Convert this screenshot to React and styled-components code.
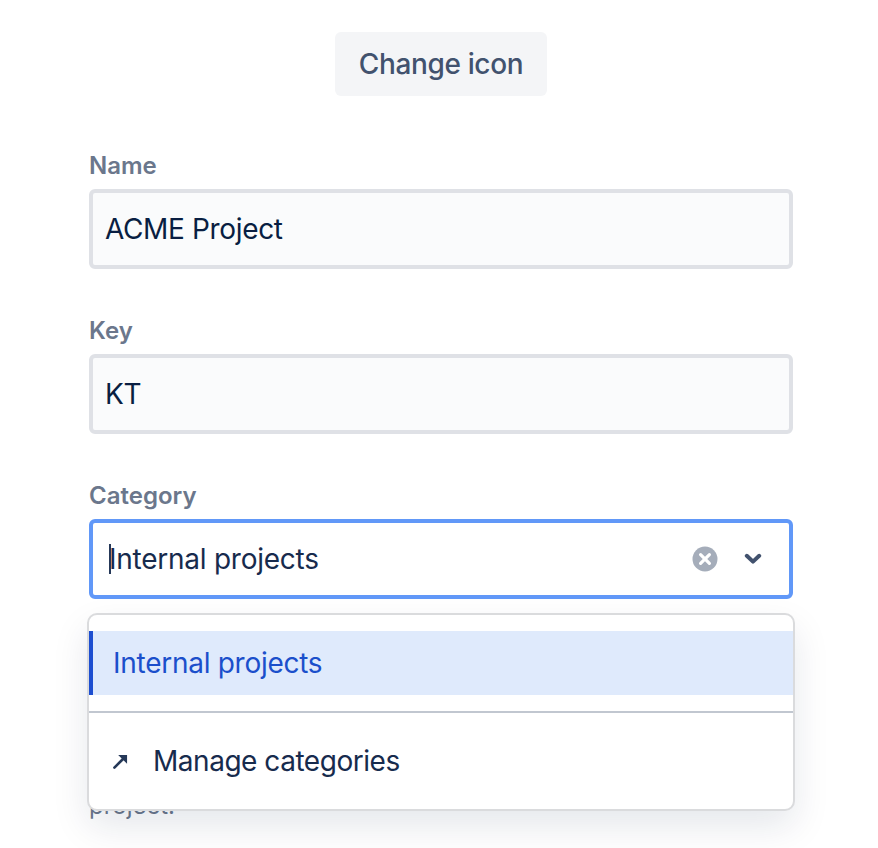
import styled, { createGlobalStyle } from "styled-components"

const GlobalStyle = createGlobalStyle`
    html, body {
        margin: 0;
        padding: 0;
        background: #FFFFFF;
        font-family: 'Inter', 'Liberation Sans', sans-serif;
    }
    body {
        height: 848px;
        overflow: hidden;
    }
`

export default function App() {
    return (
        <>
            <GlobalStyle />
            <Form>
                <IconRow>
                    <ChangeIcon>Change icon</ChangeIcon>
                </IconRow>

                <Field>
                    <Label>Name</Label>
                    <TextBox>ACME Project</TextBox>
                </Field>

                <Field>
                    <Label>Key</Label>
                    <TextBox>KT</TextBox>
                </Field>

                <Field>
                    <Label>Category</Label>
                    <SelectWrap>
                        <SelectBox>
                            <Caret />
                            <SelectValue>Internal projects</SelectValue>
                            <ClearIcon />
                            <ChevronIcon />
                        </SelectBox>
                        <Menu>
                            <MenuList>
                                <SelectedOption>Internal projects</SelectedOption>
                            </MenuList>
                            <MenuFooter>
                                <ArrowIcon />
                                <FooterLabel>Manage categories</FooterLabel>
                            </MenuFooter>
                        </Menu>
                    </SelectWrap>
                </Field>

                <HelpText>project.</HelpText>
            </Form>
        </>
    )
}

function ClearIcon() {
    return (
        <ClearSvg viewBox="0 0 26 26" width="26" height="26">
            <circle cx="13" cy="13" r="12.5" fill="#A5ADBA" />
            <path d="M8.6 8.6L17.4 17.4M17.4 8.6L8.6 17.4" stroke="#FFFFFF" strokeWidth="3.2" strokeLinecap="round" />
        </ClearSvg>
    )
}

function ChevronIcon() {
    return (
        <ChevronSvg viewBox="0 0 18 12" width="18" height="12">
            <path d="M2.8 2.8L9 8.6L15.2 2.8" fill="none" stroke="#42526E" strokeWidth="4" strokeLinecap="round" strokeLinejoin="round" />
        </ChevronSvg>
    )
}

function ArrowIcon() {
    return (
        <ArrowSvg viewBox="0 0 16 16" width="15" height="15">
            <path d="M1.5 14.5L11.5 4.5" fill="none" stroke="#253858" strokeWidth="2.8" strokeLinecap="round" />
            <path d="M5.5 1H15V10.5Z" fill="#253858" />
        </ArrowSvg>
    )
}

const Form = styled.div`
    width: 704px;
    margin-left: 89px;
    padding-top: 32px;
    display: flex;
    flex-direction: column;
`

const IconRow = styled.div`
    display: flex;
    justify-content: center;
    margin-bottom: 50px;
`

const ChangeIcon = styled.button`
    width: 212px;
    height: 64px;
    padding: 0;
    border: none;
    border-radius: 6px;
    background: #F4F5F7;
    color: #42526E;
    font-family: 'Inter', 'Liberation Sans', sans-serif;
    font-size: 28px;
    font-weight: 500;
    letter-spacing: -0.35px;
`

const Field = styled.div`
    display: flex;
    flex-direction: column;
    margin-bottom: 42px;
`

const Label = styled.label`
    height: 40px;
    line-height: 40px;
    margin-bottom: 3px;
    color: #6B778C;
    font-size: 24px;
    font-weight: 600;
`

const TextBox = styled.div`
    box-sizing: border-box;
    height: 80px;
    padding: 0 12px;
    display: flex;
    align-items: center;
    border: 4px solid #DFE1E6;
    border-radius: 6px;
    background: #FAFBFC;
    color: #091E42;
    font-size: 28px;
    letter-spacing: -0.35px;
`

const SelectWrap = styled.div`
    position: relative;
`

const SelectBox = styled.div`
    box-sizing: border-box;
    height: 80px;
    padding: 0 27px 0 16px;
    display: flex;
    align-items: center;
    border: 4px solid #6198F8;
    border-radius: 6px;
    background: #FFFFFF;
`

const Caret = styled.span`
    width: 2px;
    height: 30px;
    margin-right: -2px;
    background: #253858;
`

const SelectValue = styled.span`
    flex: 1;
    color: #172B4D;
    font-size: 28px;
    letter-spacing: -0.25px;
`

const ClearSvg = styled.svg`
    flex: none;
    margin-right: 26px;
`

const ChevronSvg = styled.svg`
    flex: none;
`

const Menu = styled.div`
    position: absolute;
    z-index: 2;
    top: 94px;
    left: -2px;
    right: -2px;
    box-sizing: border-box;
    height: 198px;
    border: 2px solid #DADBDD;
    border-radius: 10px;
    background: #FFFFFF;
    box-shadow: 0 16px 36px rgba(9, 30, 66, 0.1);
    display: flex;
    flex-direction: column;
`

const MenuList = styled.div`
    padding: 16px 0 16px;
    border-bottom: 2px solid #C1C7D0;
`

const SelectedOption = styled.div`
    box-sizing: border-box;
    height: 64px;
    padding-left: 20px;
    display: flex;
    align-items: center;
    border-left: 4px solid #1D4ED0;
    background: #DFEAFC;
    color: #1B4FCB;
    font-size: 28px;
    letter-spacing: -0.27px;
`

const MenuFooter = styled.div`
    flex: 1;
    padding-left: 24px;
    display: flex;
    align-items: center;
`

const ArrowSvg = styled.svg`
    flex: none;
    margin-right: 25px;
`

const FooterLabel = styled.span`
    color: #172B4D;
    font-size: 28px;
    letter-spacing: -0.47px;
`

const HelpText = styled.p`
    margin: 148px 0 0;
    color: #6B778C;
    font-size: 24px;
    line-height: 34px;
`
